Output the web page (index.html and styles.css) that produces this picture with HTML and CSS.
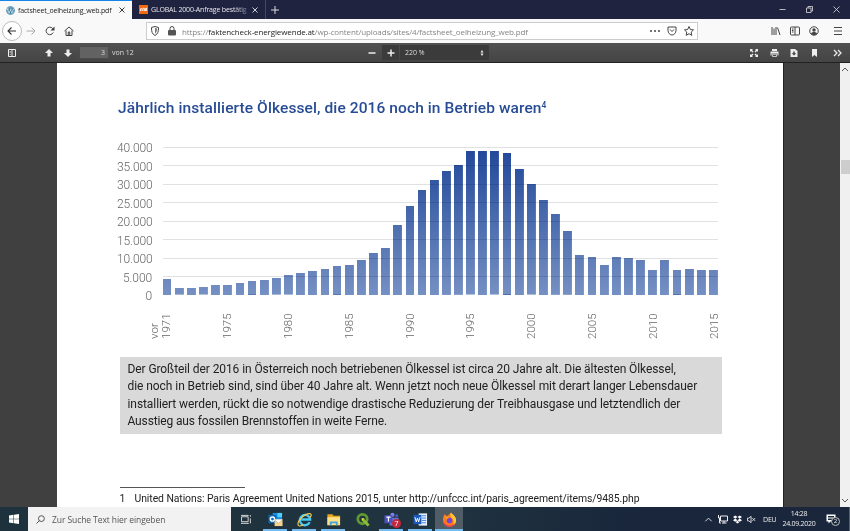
FILE: index.html
```
<!DOCTYPE html>
<html lang="de">
  <head>
    <meta charset="UTF-8" />
    <meta name="viewport" content="width=device-width, initial-scale=1.0" />
    <title>factsheet_oelheizung_web.pdf</title>
    <link rel="stylesheet" href="styles.css">
  </head>
  <body>
    <div class="tabs">
      <div class="tab active">
        <svg class="favicon" viewBox="0 0 18 18"><circle cx="9" cy="9" r="8.5" fill="#28759b"/><circle cx="9" cy="9" r="6.9" fill="none" stroke="#fff" stroke-width=".8"/><path d="M3 6l3.3 8L9 7l2.7 7L14.5 6M2.5 6h4M8 6h4" fill="none" stroke="#fff" stroke-width="1.3"/></svg>
        <span class="tab-title">factsheet_oelheizung_web.pdf</span>
        <svg class="close" viewBox="0 0 12 12"><path d="M1 1l10 10M11 1L1 11"/></svg>
      </div>
      <div class="tab">
        <svg class="favicon" viewBox="0 0 18 18"><path fill="#f26a12" d="M0 0h18v18H0z"/><path d="M3 12V8l2-2 1 2v4m2 0V7l2-1 1 2v4m2 0V7l2-1v6" fill="none" stroke="#fff" stroke-width="1.6"/></svg>
        <span class="tab-title">GLOBAL 2000-Anfrage bestätig</span>
        <svg class="close" viewBox="0 0 12 12"><path d="M1 1l10 10M11 1L1 11"/></svg>
      </div>
      <svg class="new-tab" viewBox="0 0 16 16"><path d="M8 0v16M0 8h16"/></svg>
      <div class="window-buttons">
        <svg viewBox="0 0 14 14"><path d="M1 7h12"/></svg>
        <svg viewBox="0 0 14 14"><path d="M1 4h9v9H1zM4 4V1h9v9h-3"/></svg>
        <svg viewBox="0 0 14 14"><path d="M1 1l12 12M13 1L1 13"/></svg>
      </div>
    </div>

    <div class="navbar">
      <span class="back"><svg viewBox="0 0 20 20"><path d="M18 10H2M9 3l-7 7 7 7"/></svg></span>
      <svg class="icon forward" viewBox="0 0 20 20"><path d="M1 10h17M11 3l7 7-7 7"/></svg>
      <svg class="icon reload" viewBox="0 0 20 20"><path d="M16.500 13A7.500 7.500 0 1 1 15 4.500L18 8"/><path d="M19 1v8h-8z" fill="#444" stroke="none"/></svg>
      <svg class="icon home" viewBox="0 0 20 20"><path d="M1 10l9-8 9 8M4 9v10h12V9M8.500 19v-7h3v7"/></svg>
      <div class="urlbar">
        <svg class="icon shield" viewBox="0 0 20 20"><path d="M10 1l7 2c0 8-1 13-7 16C4 16 3 11 3 3z"/><path d="M10 4l4 1c0 5-1 8-4 10z" fill="#777" stroke="none"/></svg>
        <svg class="icon lock" viewBox="0 0 20 20"><path d="M6 9V5a4 4 0 0 1 8 0v4"/><rect x="2" y="8" width="16" height="11" rx="2" fill="#555" stroke="none"/></svg>
        <span class="url">https://<b>faktencheck-energiewende.at</b>/wp-content/uploads/sites/4/factsheet_oelheizung_web.pdf</span>
        <svg class="icon dots" viewBox="0 0 20 20"><g fill="#444" stroke="none"><circle cx="2" cy="10" r="2"/><circle cx="10" cy="10" r="2"/><circle cx="18" cy="10" r="2"/></g></svg>
        <svg class="icon" viewBox="0 0 20 20"><path d="M2 2h16v7c0 5-4 9-8 9s-8-4-8-9zM6 7l4 4 4-4"/></svg>
        <svg class="icon" viewBox="0 0 20 20"><path d="M10 1l2.800 6 6.200.800-4.600 4.400 1.200 6.500L10 15.500l-5.600 3.200 1.200-6.500L1 7.800 7.200 7z"/></svg>
      </div>
      <svg class="icon library" viewBox="0 0 20 20"><path d="M2 2v16M6 5v13M10 2v16M13 3l5 15"/></svg>
      <svg class="icon sidebars" viewBox="0 0 20 20"><rect x="1" y="2" width="18" height="16" rx="2"/><path d="M10 2v16M4 6h3M4 9h3M4 12h3"/></svg>
      <svg class="icon account" viewBox="0 0 20 20"><circle cx="10" cy="10" r="8.500"/><circle cx="10" cy="8" r="3.500" fill="#444" stroke="none"/><path d="M4 15c2-4 10-4 12 0-3 4-9 4-12 0z" fill="#444" stroke="none"/></svg>
      <svg class="icon menu" viewBox="0 0 20 20"><path d="M2 3h16M2 10h16M2 17h16"/></svg>
    </div>

    <div class="pdf-toolbar">
      <svg class="toggle" viewBox="0 0 16 16"><path d="M1 1h14v14H1z" fill="none" stroke="#eee" stroke-width="2"/><path d="M3 4h3v1H3zm0 3h3v1H3zm0 3h3v1H3zM7 2h2v12H7z"/></svg>
      <svg class="prev" viewBox="0 0 16 16"><path d="M8 0l8 8h-5v7H5V8H0z"/></svg>
      <svg class="next" viewBox="0 0 16 16"><path d="M8 16L0 8h5V1h6v7h5z"/></svg>
      <span class="page-number">3</span>
      <span class="page-count">von 12</span>
      <svg class="zoom-out" viewBox="0 0 16 16"><path d="M1 6.500h14v3H1z"/></svg>
      <span class="zoom-in"><svg viewBox="0 0 16 16"><path d="M6.500 1h3v5.500H15v3H9.500V15h-3V9.500H1v-3h5.500z"/></svg></span>
      <span class="scale">220 %<svg viewBox="0 0 8 12"><path d="M4 0l3 5H1zM4 12L1 7h6z"/></svg></span>
      <div class="pdf-actions">
        <svg viewBox="0 0 16 16"><path d="M0 0h6L4 2l3 3-2 2-3-3-2 2zM16 0v6l-2-2-3 3-2-2 3-3-2-2zM0 16v-6l2 2 3-3 2 2-3 3 2 2zM16 16h-6l2-2-3-3 2-2 3 3 2-2z"/></svg>
        <svg class="print" viewBox="0 0 18 16"><path d="M4 0h10v4H4zM1 5h16v8h-2V9H3v4H1z"/><path d="M5 10.500h8v4.500H5z" fill="none" stroke="#eee" stroke-width="1.500"/></svg>
        <svg class="download" viewBox="0 0 16 16"><path d="M1 0h9l5 4v12H1z"/><path d="M8 13L3.500 8.500h3V5h3v3.500h3z" fill="#444"/></svg>
        <svg class="bookmark" viewBox="0 0 10 16"><path d="M0 0h10v16l-5-4-5 4z"/></svg>
        <svg class="more" viewBox="0 0 18 16"><path d="M2 2l6 6-6 6M10 2l6 6-6 6" fill="none" stroke="#eee" stroke-width="2.500"/></svg>
      </div>
    </div>

    <div class="viewer">
      <div class="page">
        <h2>Jährlich installierte Ölkessel, die 2016 noch in Betrieb waren<sup>4</sup></h2>
        <div class="chart">
          <div class="y-axis">
            <span>40.000</span>
            <span>35.000</span>
            <span>30.000</span>
            <span>25.000</span>
            <span>20.000</span>
            <span>15.000</span>
            <span>10.000</span>
            <span>5.000</span>
            <span>0</span>
          </div>
          <div class="plot">
            <div class="bars"></div>
            <div class="grid"></div>
          </div>
        </div>
        <div class="x-axis">
          <span>vor<br>1971</span>
          <span>1975</span>
          <span>1980</span>
          <span>1985</span>
          <span>1990</span>
          <span>1995</span>
          <span>2000</span>
          <span>2005</span>
          <span>2010</span>
          <span>2015</span>
        </div>
        <p class="note">
          <span class="line1">Der Großteil der 2016 in Österreich noch betriebenen Ölkessel ist circa 20 Jahre alt. Die ältesten Ölkessel,</span>
          <span class="line2">die noch in Betrieb sind, sind über 40 Jahre alt. Wenn jetzt noch neue Ölkessel mit derart langer Lebensdauer</span>
          <span class="line3">installiert werden, rückt die so notwendige drastische Reduzierung der Treibhausgase und letztendlich der</span>
          <span class="line4">Ausstieg aus fossilen Brennstoffen in weite Ferne.</span>
        </p>
        <div class="footnote"><span>1</span>United Nations: Paris Agreement United Nations 2015, unter http://unfccc.int/paris_agreement/items/9485.php</div>
      </div>
      <div class="scrollbar">
        <svg viewBox="0 0 10 6"><path d="M2 5l3-3 3 3"/></svg>
        <div class="thumb"></div>
        <svg viewBox="0 0 10 6"><path d="M2 1l3 3 3-3"/></svg>
      </div>
    </div>

    <div class="taskbar">
      <div class="start"><svg viewBox="0 0 20 20"><path d="M0 3l9-1.300V9.500H0zM10 1.500L20 0v9.500H10zM0 10.500h9v7.800L0 17zM10 10.500h10V20l-10-1.500z"/></svg></div>
      <div class="search">
        <svg viewBox="0 0 20 20"><circle cx="12" cy="8" r="6.500"/><path d="M7.500 12.500L1 19"/></svg>
        Zur Suche Text hier eingeben
      </div>
      <div class="task-view"><svg viewBox="0 0 20 20"><path d="M1 5h12v9H1zM1 2v1.500M13 2v1.500M1 18v-2M13 18v-2M1 2.500h12M1 17h12M17 2v3M17 8v9"/></svg></div>
      <div class="apps">
        <div class="app open">
          <svg viewBox="0 0 32 32"><path fill="#1a8ee0" d="M10 2h20v20H10z"/><path fill="#50d0ff" d="M20 2h10v9H20z"/><path fill="#0867b8" d="M1 6h17v18H1z"/><circle cx="9.500" cy="15" r="4.500" fill="none" stroke="#fff" stroke-width="3"/><path fill="#f8d190" d="M14 16h17v14H14z"/><path d="M14 16l8.500 8 8.500-8" fill="#fff" stroke="#d28c3d"/></svg>
        </div>
        <div class="app open">
          <svg viewBox="0 0 32 32"><path d="M27 22a11 11 0 1 1 1-6H9" fill="none" stroke="#48c8f5" stroke-width="5"/><path d="M3 29C-2 19 20 0 29 4c3 2 0 7-1 8M3 29c3 2 7 0 10-2" fill="none" stroke="#f6cb4c" stroke-width="2.500"/></svg>
        </div>
        <div class="app open">
          <svg viewBox="0 0 32 32"><path fill="#e9a91d" d="M3 5h11l2 3h14v20H3z"/><path fill="#ffe08a" d="M3 11h27v17H3z"/><path fill="#3fa4dd" d="M8 20h17v8h-4v-4h-9v4H8z"/></svg>
        </div>
        <div class="app">
          <svg viewBox="0 0 32 32"><circle cx="16" cy="15" r="10" fill="none" stroke="#609b32" stroke-width="6"/><path d="M16 15l13 14" stroke="#8fbd38" stroke-width="6"/><path d="M14 13l6 1-5 5z" fill="#e8dc3c"/></svg>
        </div>
        <div class="app open teams">
          <svg viewBox="0 0 32 32"><circle cx="18" cy="6" r="4.500" fill="#7b83eb"/><circle cx="27" cy="8" r="3" fill="#5059c9"/><path fill="#6971d4" d="M12 12h19v11l-7 6H12z"/><path fill="#4b53bc" d="M1 7h17v17H1z"/><path d="M5 11h9M9.500 11v9" stroke="#fff" stroke-width="2.500"/></svg>
          <span class="badge">7</span>
        </div>
        <div class="app open">
          <svg viewBox="0 0 32 32"><path fill="#e9f1ff" d="M12 3h18v26H12z"/><path d="M19 8h9M19 13h9M19 18h9M19 23h9" stroke="#397dd2" stroke-width="2"/><path fill="#185abd" d="M1 6h17v20H1z"/><path d="M4 11l3 10 2.500-8 2.500 8 3-10" fill="none" stroke="#fff" stroke-width="2"/></svg>
        </div>
        <div class="app open current">
          <svg viewBox="0 0 32 32"><path fill="#ff7a18" d="M6 4l4 5 6-4 3-4c2 5 11 7 11 17a14 14 0 0 1-28 0C2 12 3 8 6 4z"/><path fill="#ffc936" d="M19 1c3 4 11 7 11 17 0 5-3 8-6 10 3-9-1-14-5-17-2-3-1-7 0-10z"/><path fill="#ed2769" d="M2 16c2 15 20 17 26 7-3 13-26 11-26-7z"/><circle cx="16" cy="18" r="6" fill="#7542d8"/><path fill="#ff9824" d="M5 10c4-2 8 0 11 3-4 0-5 2-6 4z"/></svg>
        </div>
      </div>
      <div class="tray">
        <svg viewBox="0 0 20 20"><path d="M3 14l7-7 7 7"/></svg>
        <svg class="network" viewBox="0 0 20 20"><path d="M5 4h14v10H5zM8 18h9M12 14v4M1 2v6h4M3 8v10h3"/></svg>
        <svg class="dropbox" viewBox="0 0 20 20"><path fill="#fff" stroke="none" d="M5 1l5 3.500L5 8 0 4.500zM15 1l5 3.500L15 8l-5-3.500zM5 8l5 3.500L5 15l-5-3.500zM15 8l5 3.500-5 3.500-5-3.500zM10 13l4 3-4 3-4-3z"/></svg>
        <svg class="sound" viewBox="0 0 20 20"><path d="M1 7h3l5-4v14l-5-4H1zM12 7l6 6M18 7l-6 6"/></svg>
        <span class="lang">DEU</span>
        <span class="clock">14:28<br>24.09.2020</span>
        <span class="notifications"><svg viewBox="0 0 20 20"><path fill="#fff" stroke="none" d="M1 1h18v14H9l-4 4v-4H1z"/><path d="M4 5h12M4 8h12M4 11h8" stroke="#1a283b"/></svg><span class="count">2</span></span>
      </div>
    </div>

    <script>
      // installed boilers per year, first entry is everything before 1971
      let boilers = [
        4340, 1800, 1950, 2050, 2700, 2800, 3350, 3700, 4050, 4500, 5300, 5950,
        6500, 7050, 7750, 8200, 9500, 11400, 12800, 18950, 24100, 28450, 31150,
        33500, 35100, 38800, 39000, 38800, 38250, 34100, 29900, 25750, 21850,
        17250, 10850, 10400, 8200, 10400, 10100, 9550, 6850, 9550, 6650, 7150,
        6800, 6850
      ];
      let $bars = document.querySelector(".bars");
      boilers.forEach((count) => {
        let $bar = document.createElement("i");
        $bar.style.height = (count / 40000) * 100 + "%";
        $bars.appendChild($bar);
      });
    </script>
  </body>
</html>
```
FILE: styles.css
```
* {
  box-sizing: border-box;
}

body {
  display: flex;
  flex-direction: column;
  width: 850px;
  height: 531px;
  margin: 0;
  overflow: hidden;
  background: #404040;
  font-family: "Open Sans", "Noto Sans", sans-serif;
  font-size: 7px;
}

svg {
  display: block;
  flex: none;
}

/* tabs */
.tabs {
  display: flex;
  align-items: center;
  height: 19px;
  background: #202340;
  color: #e8e8ee;
}

.tab {
  display: flex;
  align-items: center;
  width: 134px;
  height: 19px;
  padding-left: 7px;
  border-right: 1px solid #44475f;
}

.tab.active {
  width: 132px;
  padding-left: 6px;
  border: none;
  border-top: 1px solid #1685e8;
  background: #f9f9fa;
  color: #222;
}

.favicon {
  width: 9px;
  height: 9px;
  margin-right: 3px;
}

.tab-title {
  width: 97px;
  white-space: nowrap;
  letter-spacing: -0.17px;
}

.tab:not(.active) .tab-title {
  -webkit-mask-image: linear-gradient(to right, #000 85%, rgba(0, 0, 0, 0.3));
  mask-image: linear-gradient(to right, #000 85%, rgba(0, 0, 0, 0.3));
}

.close {
  width: 6px;
  height: 6px;
  margin-left: 4px;
  fill: none;
  stroke: currentColor;
  stroke-width: 1.8;
}

.new-tab {
  width: 8px;
  height: 8px;
  margin-left: 5px;
  stroke: #ddd;
  stroke-width: 2;
}

.window-buttons {
  display: flex;
  gap: 20px;
  margin: 0 10px 0 auto;
}

.window-buttons svg {
  width: 7px;
  height: 7px;
  fill: none;
  stroke: #ddd;
  stroke-width: 1.6;
}

/* navigation */
.navbar {
  display: flex;
  align-items: center;
  height: 24px;
  padding-left: 2px;
  background: #f9f9fa;
}

.icon {
  width: 10px;
  height: 10px;
  fill: none;
  stroke: #444;
  stroke-width: 2;
}

.back {
  display: flex;
  flex: none;
  align-items: center;
  justify-content: center;
  width: 20px;
  height: 20px;
  border: 1px solid #bbb;
  border-radius: 50%;
  background: #fff;
}

.back svg {
  width: 10px;
  height: 10px;
  fill: none;
  stroke: #333;
  stroke-width: 2.2;
}

.forward {
  margin-left: 4px;
  stroke: #aaa;
}

.reload {
  margin-left: 9px;
}

.home {
  margin-left: 9px;
}

.urlbar {
  display: flex;
  align-items: center;
  width: 552px;
  height: 18px;
  margin-left: 72px;
  padding: 0 3px;
  border: 1px solid #ccc;
  background: #fff;
}

.lock {
  margin-left: 7px;
}

.url {
  margin: 0 auto 0 5px;
  color: #858585;
  font-size: 8px;
  letter-spacing: -0.13px;
  white-space: nowrap;
}

.url b {
  color: #222;
  font-weight: 400;
}

.urlbar .icon + .icon:not(.lock) {
  margin-left: 7px;
}

.library {
  margin-left: 73px;
}

.sidebars {
  margin-left: 9px;
}

.account {
  margin-left: 9px;
}

.menu {
  margin-left: 14px;
}

/* pdf toolbar */
.pdf-toolbar {
  display: flex;
  align-items: center;
  height: 20px;
  border-bottom: 1px solid #222;
  background: linear-gradient(#515151, #444);
  color: #ddd;
}

.pdf-toolbar svg {
  width: 8px;
  height: 8px;
  fill: #eee;
}

.toggle {
  margin-left: 8px;
}

.prev {
  margin-left: 29px;
}

.next {
  margin-left: 11px;
}

.page-number {
  width: 30px;
  height: 13px;
  margin-left: 7px;
  padding-right: 3px;
  border: 1px solid #4b4b4b;
  background: #626262;
  line-height: 11px;
  text-align: right;
}

.page-count {
  width: 24px;
  margin-left: 3px;
  white-space: nowrap;
}

.zoom-out {
  margin-left: 232px;
}

.zoom-in {
  display: flex;
  align-items: center;
  justify-content: center;
  width: 17px;
  height: 15px;
  margin-left: 6px;
  background: #3b3b3b;
}

.scale {
  display: flex;
  align-items: center;
  justify-content: space-between;
  width: 89px;
  height: 15px;
  margin-left: 1px;
  padding: 0 5px;
  background: #3b3b3b;
}

.scale svg {
  width: 4px;
  height: 6px;
}

.pdf-actions {
  display: flex;
  align-items: center;
  margin-left: auto;
  padding-right: 8px;
}

.pdf-actions .print {
  width: 9px;
  margin-left: 12px;
}

.pdf-actions .download {
  margin-left: 11px;
}

.pdf-actions .bookmark {
  width: 5px;
  margin-left: 14px;
}

.pdf-actions .more {
  width: 9px;
  margin-left: 16px;
}

/* document */
.viewer {
  display: flex;
  flex: 1;
  min-height: 0;
  padding-left: 57px;
}

.page {
  width: 727px;
  padding: 35px 0 0 61px;
  border-right: 1px solid #222;
  background: #fff;
  color: #222;
  font-family: Roboto, "Liberation Sans", sans-serif;
  overflow: hidden;
}

.page h2 {
  height: 20px;
  margin: 0;
  color: #274c95;
  font-size: 15.5px;
  font-weight: 500;
  line-height: 20px;
  letter-spacing: 0.1px;
  white-space: nowrap;
}

.page sup {
  position: relative;
  top: 1px;
  font-size: 8.5px;
  line-height: 0;
}

.chart {
  display: flex;
  height: 148px;
  margin-top: 29px;
}

.y-axis {
  display: flex;
  flex-direction: column;
  justify-content: space-between;
  width: 35px;
  margin: -7px 10.7px -9px -1px;
  color: #666;
  font-size: 12px;
  font-weight: 300;
  line-height: 16px;
  letter-spacing: -0.1px;
  text-align: right;
}

.plot {
  display: grid;
  width: 555.3px;
  height: 148px;
}

.bars,
.grid {
  grid-area: 1 / 1;
}

.bars {
  display: flex;
  align-items: flex-end;
  justify-content: space-between;
}

.bars i {
  width: 8.8px;
  background: linear-gradient(#204799, #7590c3) bottom / 100% 148px;
}

.grid {
  background: repeating-linear-gradient(#dfe1e5 0 1px, transparent 1px 18.45px);
  mix-blend-mode: multiply;
}

.x-axis {
  display: flex;
  justify-content: space-between;
  height: 26px;
  margin: 18px 63px 0 30px;
  color: #666;
  font-size: 11.5px;
  font-weight: 300;
  line-height: 12px;
}

.x-axis span {
  display: flex;
  flex-direction: column;
  justify-content: flex-end;
  width: 24px;
  text-align: left;
  writing-mode: vertical-rl;
  transform: rotate(180deg);
}

.note {
  width: 602px;
  height: 77px;
  margin: 18px 0 0 1.5px;
  padding: 4px 8px;
  background: #d9d9d9;
  font-size: 12px;
  line-height: 17.4px;
}

.note span {
  display: block;
  width: max-content;
  white-space: nowrap;
}

.note .line1 {
  letter-spacing: -0.09px;
}

.note .line2 {
  letter-spacing: -0.065px;
}

.note .line3 {
  letter-spacing: -0.08px;
}

.note .line4 {
  letter-spacing: -0.14px;
}

.footnote {
  margin: 53px 0 0 1.5px;
  font-size: 10.4px;
  line-height: 21px;
  letter-spacing: -0.065px;
  white-space: nowrap;
}

.footnote::before {
  content: "";
  display: block;
  width: 125px;
  height: 1px;
  background: #555;
}

.footnote span {
  display: inline-block;
  width: 15px;
}

.scrollbar {
  display: flex;
  flex-direction: column;
  width: 10px;
  margin-left: auto;
  padding: 3px 0;
  background: #f0f0f0;
}

.scrollbar svg {
  width: 10px;
  height: 6px;
  fill: none;
  stroke: #555;
}

.thumb {
  height: 14px;
  margin: 88px 0 auto 1px;
  background: #cdcdcd;
}

/* taskbar */
.taskbar {
  display: flex;
  align-items: center;
  height: 24px;
  background: linear-gradient(to right, #1d323c, #20343f 50%, #19263c 75%);
  color: #eee;
}

.start {
  display: flex;
  align-items: center;
  width: 28px;
  padding-left: 9px;
}

.start svg {
  width: 10px;
  height: 10px;
  fill: #fff;
}

.search {
  display: flex;
  align-items: center;
  width: 203px;
  height: 24px;
  padding-left: 8px;
  background: #f2f2f2;
  color: #555;
  font-size: 8.5px;
  letter-spacing: -0.08px;
}

.search svg {
  width: 9px;
  height: 9px;
  margin-right: 7px;
  fill: none;
  stroke: #444;
  stroke-width: 2;
}

.task-view {
  width: 30px;
  padding-left: 10px;
}

.task-view svg {
  width: 11px;
  height: 11px;
  fill: none;
  stroke: #ddd;
  stroke-width: 1.7;
}

.apps {
  display: flex;
  gap: 1px;
}

.app {
  position: relative;
  display: flex;
  align-items: center;
  justify-content: center;
  width: 28px;
  height: 24px;
}

.app svg {
  width: 15px;
  height: 15px;
}

.app.open {
  background: linear-gradient(#76b9ed, #76b9ed) center bottom / 24px 2px no-repeat;
}

.app.current {
  background-color: #505d66;
  background-size: 28px 2px;
}

.badge {
  position: absolute;
  right: 4px;
  bottom: 3px;
  width: 9px;
  height: 9px;
  border-radius: 50%;
  background: #c4263c;
  color: #fff;
  font-size: 7px;
  line-height: 9px;
  text-align: center;
}

.tray {
  display: flex;
  align-items: center;
  height: 24px;
  margin-left: auto;
  padding-right: 9px;
  border-right: 1px solid #53606e;
}

.tray svg {
  width: 9px;
  height: 9px;
  fill: none;
  stroke: #eee;
  stroke-width: 2;
}

.tray .network {
  width: 10px;
  height: 10px;
  margin-left: 5px;
}

.tray .dropbox {
  margin-left: 5px;
}

.tray .sound {
  margin-left: 5px;
}

.lang {
  width: 14px;
  margin-left: 7px;
  letter-spacing: -0.2px;
}

.clock {
  width: 36px;
  margin-left: 4px;
  line-height: 10px;
  letter-spacing: -0.25px;
  text-align: center;
  white-space: nowrap;
}

.notifications {
  position: relative;
  margin-left: 9px;
  width: 14px;
}

.tray .notifications svg {
  width: 10px;
  height: 10px;
}

.count {
  position: absolute;
  left: 5px;
  top: 3px;
  width: 9px;
  height: 9px;
  border: 1px solid #bbb;
  border-radius: 50%;
  background: #1a283b;
  font-size: 6px;
  line-height: 7px;
  text-align: center;
}
```
